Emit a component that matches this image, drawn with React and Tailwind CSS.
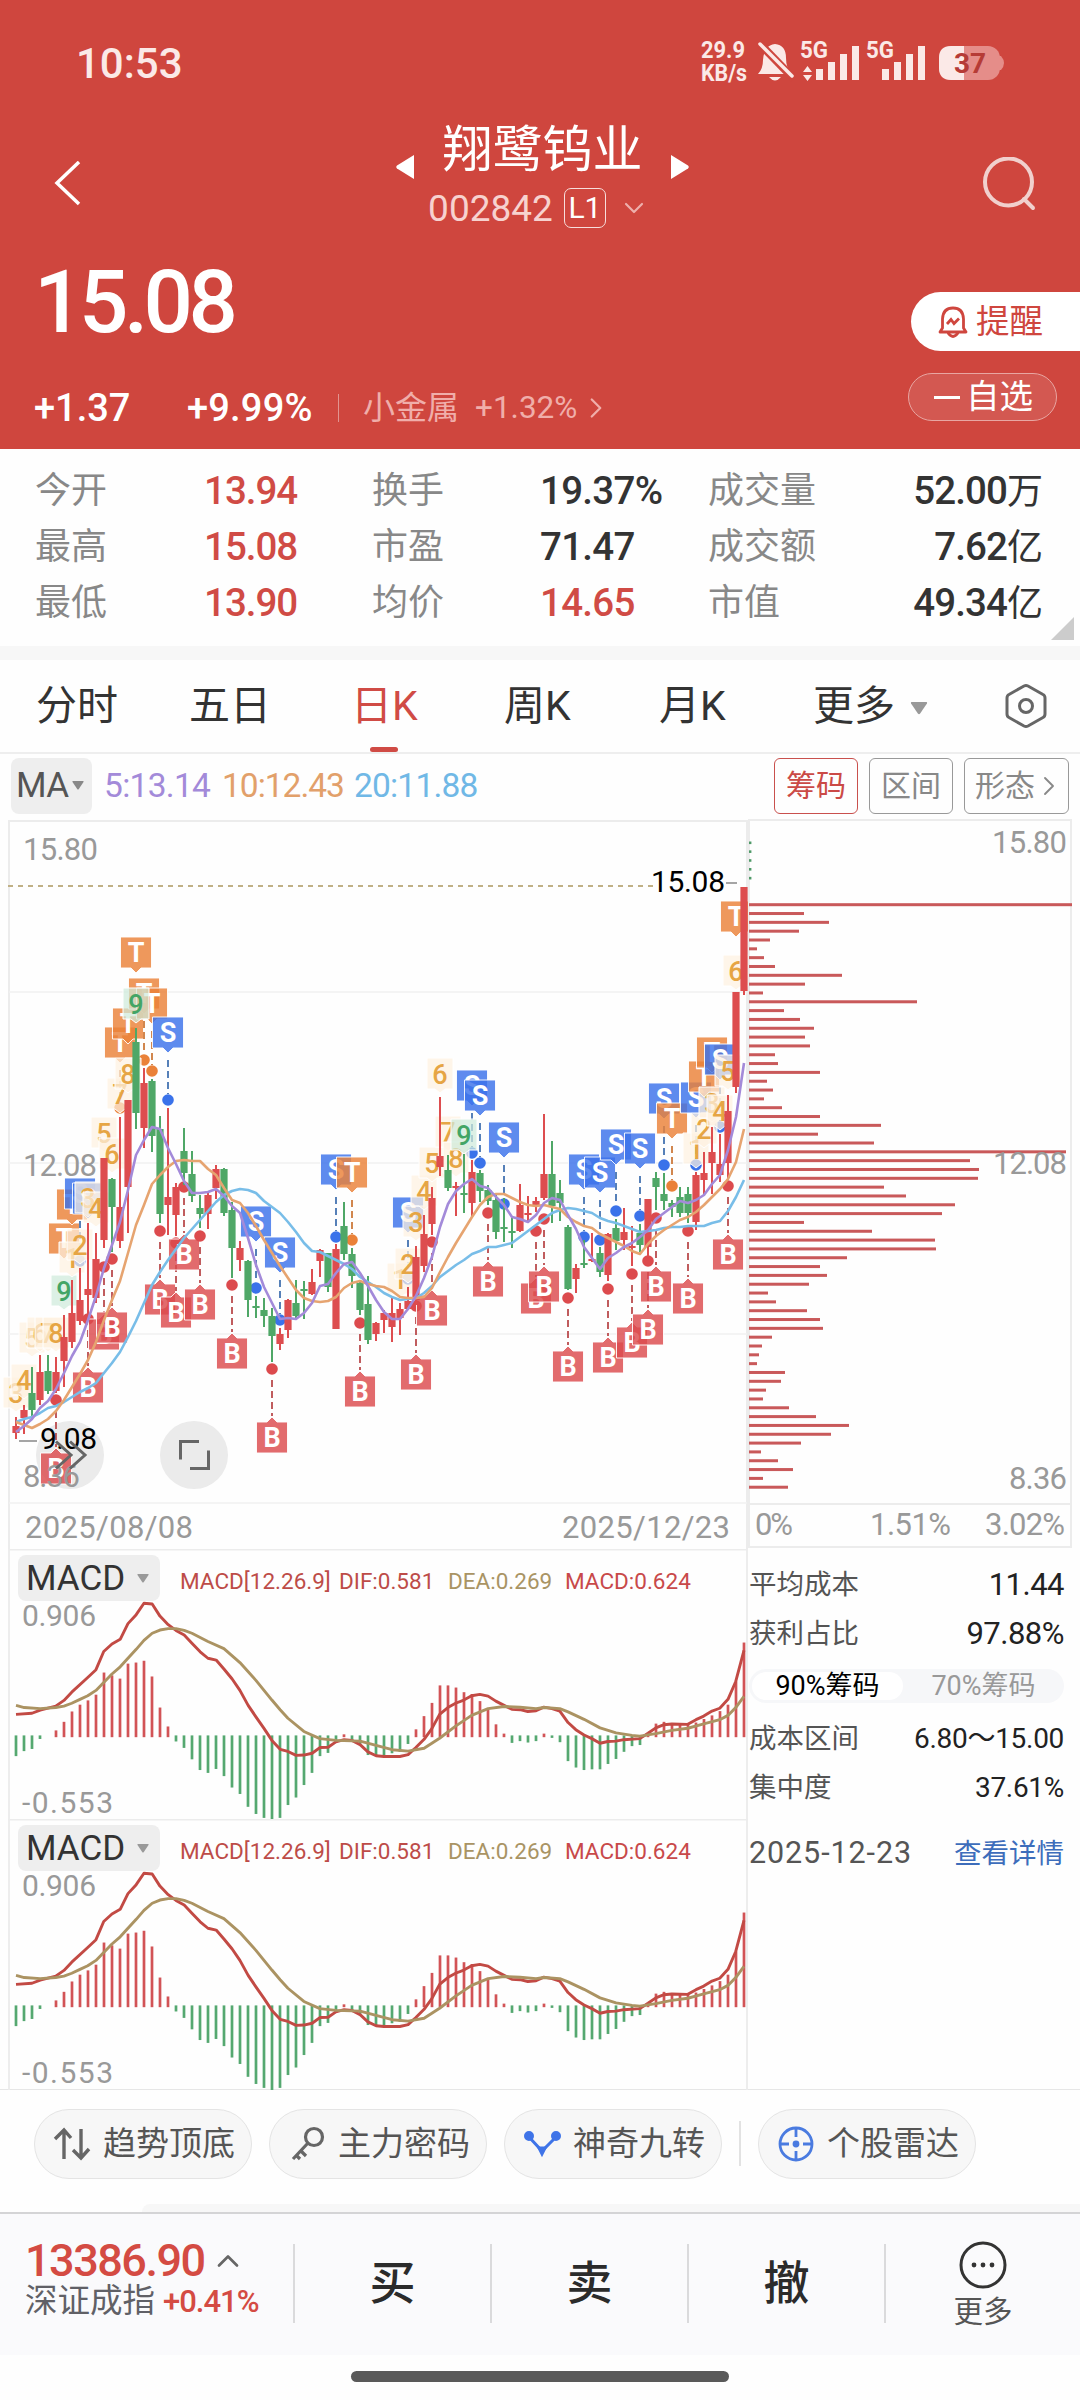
import { ChevronDown, ChevronRight, ChevronUp } from "lucide-react";

// [direction, high, bodyTop, bodyBottom, low]
const CANDLES = [
  ["r", 1417, 1426, 1433, 1439], ["r", 1405, 1410, 1418, 1434], ["g", 1367, 1393, 1410, 1416], ["r", 1355, 1372, 1400, 1405],
  ["g", 1355, 1371, 1391, 1394], ["r", 1357, 1372, 1391, 1393], ["r", 1315, 1337, 1361, 1387], ["r", 1280, 1313, 1342, 1348],
  ["r", 1268, 1300, 1321, 1325], ["r", 1223, 1289, 1295, 1320], ["r", 1233, 1259, 1298, 1303], ["r", 1158, 1158, 1240, 1248],
  ["g", 1178, 1179, 1207, 1252], ["r", 1117, 1207, 1241, 1248], ["r", 1100, 1100, 1187, 1233], ["g", 1028, 1042, 1113, 1129],
  ["r", 1068, 1083, 1128, 1148], ["g", 1079, 1081, 1136, 1152], ["g", 1116, 1129, 1214, 1223], ["r", 1108, 1197, 1205, 1235],
  ["r", 1183, 1187, 1215, 1236], ["g", 1128, 1151, 1173, 1185], ["g", 1151, 1174, 1196, 1202], ["g", 1195, 1208, 1214, 1228],
  ["r", 1192, 1195, 1214, 1229], ["r", 1165, 1169, 1188, 1199], ["g", 1168, 1169, 1213, 1216], ["g", 1202, 1210, 1248, 1278],
  ["r", 1241, 1248, 1260, 1271], ["g", 1260, 1261, 1300, 1317], ["g", 1296, 1306, 1308, 1318], ["g", 1298, 1310, 1316, 1327],
  ["g", 1308, 1316, 1336, 1362], ["r", 1328, 1334, 1344, 1350], ["r", 1299, 1300, 1330, 1338], ["g", 1280, 1303, 1316, 1319],
  ["g", 1281, 1289, 1291, 1319], ["r", 1269, 1282, 1294, 1295], ["r", 1249, 1250, 1261, 1277], ["g", 1253, 1253, 1287, 1292],
  ["r", 1244, 1249, 1329, 1329], ["g", 1202, 1226, 1254, 1260], ["g", 1248, 1254, 1276, 1288], ["g", 1282, 1283, 1310, 1315],
  ["g", 1276, 1304, 1340, 1344], ["r", 1322, 1323, 1334, 1341], ["r", 1310, 1313, 1320, 1333], ["r", 1298, 1313, 1327, 1342],
  ["r", 1303, 1309, 1318, 1335], ["r", 1287, 1301, 1309, 1309], ["r", 1246, 1257, 1300, 1305], ["r", 1215, 1234, 1266, 1272],
  ["r", 1187, 1198, 1224, 1235], ["r", 1097, 1156, 1167, 1176], ["g", 1155, 1170, 1188, 1191], ["r", 1182, 1186, 1188, 1216],
  ["g", 1154, 1193, 1195, 1213], ["r", 1160, 1172, 1203, 1217], ["g", 1170, 1173, 1191, 1202], ["g", 1185, 1190, 1201, 1205],
  ["g", 1193, 1200, 1232, 1239], ["g", 1198, 1227, 1229, 1242], ["g", 1217, 1231, 1233, 1248], ["r", 1184, 1205, 1231, 1232],
  ["r", 1196, 1213, 1215, 1223], ["r", 1197, 1201, 1205, 1212], ["r", 1114, 1174, 1198, 1200], ["g", 1141, 1174, 1206, 1223],
  ["g", 1180, 1193, 1203, 1221], ["g", 1225, 1227, 1289, 1290], ["r", 1264, 1268, 1279, 1293], ["g", 1240, 1263, 1265, 1268],
  ["r", 1233, 1259, 1261, 1262], ["g", 1247, 1253, 1272, 1277], ["r", 1233, 1234, 1275, 1281], ["g", 1219, 1228, 1241, 1250],
  ["r", 1208, 1232, 1240, 1250], ["r", 1226, 1246, 1248, 1266], ["g", 1224, 1233, 1245, 1252], ["r", 1199, 1199, 1247, 1257],
  ["g", 1172, 1178, 1187, 1210], ["g", 1173, 1194, 1201, 1210], ["g", 1200, 1203, 1207, 1217], ["g", 1187, 1197, 1213, 1217],
  ["g", 1187, 1194, 1213, 1223], ["r", 1172, 1175, 1222, 1230], ["r", 1152, 1173, 1180, 1196], ["r", 1127, 1152, 1163, 1194],
  ["r", 1134, 1164, 1175, 1182], ["r", 1095, 1111, 1163, 1180], ["r", 992, 992, 1087, 1093], ["r", 887, 887, 991, 995],
];

const MA5 = [
  1432, 1426, 1419, 1408, 1401, 1389, 1373, 1356, 1342, 1320, 1296, 1268, 1245, 1222, 1190, 1155, 1140, 1127, 1129, 1148,
  1164, 1181, 1193, 1193, 1192, 1189, 1196, 1206, 1213, 1238, 1265, 1287, 1303, 1319, 1318, 1319, 1313, 1303, 1286, 1284,
  1273, 1264, 1262, 1273, 1286, 1300, 1312, 1319, 1319, 1309, 1296, 1278, 1257, 1227, 1204, 1191, 1184, 1179, 1186, 1188,
  1197, 1205, 1217, 1219, 1222, 1215, 1203, 1198, 1200, 1215, 1229, 1247, 1258, 1269, 1258, 1253, 1247, 1243, 1237, 1230,
  1219, 1213, 1207, 1201, 1203, 1200, 1195, 1184, 1175, 1150, 1117, 1063,
];
const MA10 = [
  1422, 1425, 1428, 1424, 1419, 1411, 1400, 1387, 1374, 1360, 1342, 1320, 1300, 1281, 1253, 1225, 1205, 1184, 1175, 1167,
  1161, 1160, 1161, 1161, 1169, 1175, 1188, 1200, 1203, 1213, 1226, 1240, 1253, 1266, 1278, 1290, 1298, 1301, 1302, 1301,
  1297, 1288, 1283, 1281, 1284, 1286, 1287, 1291, 1297, 1298, 1298, 1297, 1288, 1272, 1257, 1243, 1230, 1217, 1205, 1197,
  1194, 1194, 1198, 1202, 1205, 1206, 1205, 1207, 1209, 1217, 1222, 1226, 1228, 1234, 1238, 1242, 1246, 1251, 1254, 1244,
  1236, 1230, 1225, 1220, 1217, 1212, 1205, 1197, 1189, 1179, 1162, 1129,
];
const MA20 = [
  1422, 1419, 1417, 1413, 1408, 1406, 1402, 1397, 1392, 1388, 1383, 1373, 1363, 1352, 1337, 1321, 1303, 1285, 1272, 1260,
  1249, 1238, 1229, 1220, 1211, 1202, 1195, 1191, 1189, 1190, 1193, 1201, 1207, 1213, 1222, 1232, 1243, 1251, 1252, 1256,
  1260, 1264, 1269, 1277, 1282, 1287, 1293, 1297, 1300, 1299, 1298, 1293, 1286, 1277, 1271, 1265, 1260, 1254, 1251, 1247,
  1247, 1245, 1243, 1237, 1231, 1225, 1219, 1213, 1210, 1208, 1209, 1211, 1213, 1218, 1221, 1223, 1226, 1229, 1232, 1231,
  1230, 1228, 1227, 1227, 1226, 1226, 1226, 1223, 1221, 1211, 1197, 1180,
];

// [kind, candle index, tag top, dot y (0 = no dot)]
const SIGNALS = [
  ["T", 6, 1223, 0], ["T", 7, 1189, 0], ["S", 8, 1178, 1261], ["S", 9, 1183, 0],
  ["T", 13, 1027, 1108], ["T", 14, 1008, 0], ["T", 15, 937, 0], ["T", 16, 978, 1060], ["T", 17, 988, 1071],
  ["S", 19, 1017, 1100], ["S", 30, 1206, 1288], ["S", 33, 1237, 1320], ["S", 40, 1154, 1237], ["T", 42, 1157, 1240],
  ["S", 49, 1197, 1279], ["S", 57, 1070, 1153], ["S", 58, 1080, 1163], ["S", 61, 1122, 1204],
  ["S", 71, 1154, 1237], ["S", 73, 1157, 1240], ["S", 75, 1129, 1211], ["S", 78, 1133, 1216],
  ["S", 81, 1083, 1165], ["T", 82, 1103, 1186], ["S", 85, 1082, 1165], ["T", 86, 1061, 0], ["T", 87, 1037, 0],
  ["S", 88, 1044, 1127], ["T", 90, 901, 0],
  ["B", 5, 1453, 1400], ["B", 9, 1372, 1319], ["B", 11, 1319, 1267], ["B", 12, 1312, 1259], ["B", 18, 1284, 1231],
  ["B", 20, 1297, 1243], ["B", 21, 1239, 1187], ["B", 23, 1289, 1236], ["B", 27, 1338, 1285], ["B", 32, 1422, 1369],
  ["B", 43, 1376, 1323], ["B", 50, 1359, 1306], ["B", 52, 1295, 1242], ["B", 59, 1266, 1213], ["B", 65, 1283, 1231],
  ["B", 66, 1271, 1219], ["B", 69, 1351, 1298], ["B", 74, 1342, 1289], ["B", 77, 1327, 1274], ["B", 79, 1314, 1261],
  ["B", 80, 1271, 1218], ["B", 84, 1283, 1231], ["B", 89, 1239, 1186],
];

// [digit, candle index, tag top]
const COUNTS = [
  [3, 0, 1377], [4, 1, 1364], [5, 2, 1322], [6, 3, 1317], [7, 4, 1317], [8, 5, 1317], [9, 6, 1275], [1, 7, 1242],
  [2, 8, 1229], [3, 9, 1182], [4, 10, 1192], [5, 11, 1117], [6, 12, 1138], [7, 13, 1078], [8, 14, 1058], [9, 15, 988],
  [1, 48, 1263], [2, 49, 1248], [3, 50, 1206], [4, 51, 1175], [5, 52, 1147], [6, 53, 1058], [7, 54, 1116], [8, 55, 1142],
  [9, 56, 1119], [1, 85, 1133], [2, 86, 1113], [3, 87, 1087], [4, 88, 1095], [5, 89, 1055], [6, 90, 955],
];

const CHIPS = [
  323, 55, 80, 50, 21, 8, 15, 26, 93, 56, 14, 168, 35, 51, 65, 56, 61, 26, 29, 71, 18, 24, 15, 33, 71, 132, 69, 125, 317,
  221, 230, 229, 135, 157, 206, 193, 55, 123, 186, 187, 98, 71, 78, 60, 19, 27, 58, 71, 74, 23, 13, 10, 8, 36, 32, 17, 14,
  40, 67, 100, 82, 52, 12, 29, 44, 14, 39,
];

// histogram tips, same vertical unit as the DIF / DEA points
const HIST = [
  604, 590, 584, 556, 548, 532, 508, 479, 460, 448, 432, 370, 378, 387, 345, 342, 337, 381, 468, 521, 563, 581, 613, 643,
  651, 640, 660, 692, 710, 746, 766, 777, 783, 777, 741, 720, 685, 651, 604, 595, 567, 543, 558, 570, 601, 604, 604, 596,
  592, 570, 529, 492, 455, 406, 406, 412, 425, 430, 450, 472, 515, 541, 567, 562, 566, 562, 541, 553, 565, 618, 636, 643,
  641, 641, 626, 612, 592, 576, 573, 543, 513, 508, 512, 515, 515, 510, 500, 490, 478, 460, 395, 286,
];
const DIF = [
  [33, 487], [66, 484], [83, 475], [115, 464], [132, 448], [148, 425], [181, 384], [198, 362], [214, 311], [231, 290],
  [248, 277], [264, 233], [281, 208], [297, 176], [314, 178], [330, 212], [347, 236], [363, 252], [380, 265], [396, 288],
  [413, 312], [429, 330], [446, 335], [462, 360], [479, 388], [495, 420], [512, 462], [528, 494], [545, 527], [561, 560],
  [578, 585], [594, 591], [611, 602], [627, 601], [644, 596], [660, 580], [677, 579], [693, 564], [710, 558], [726, 560],
  [743, 572], [759, 592], [776, 603], [792, 605], [825, 605], [842, 600], [858, 580], [875, 557], [891, 527], [907, 487],
  [924, 468], [940, 456], [957, 447], [973, 435], [990, 431], [1007, 436], [1023, 450], [1040, 462], [1056, 473],
  [1073, 474], [1089, 479], [1106, 477], [1122, 467], [1139, 471], [1155, 478], [1172, 510], [1188, 530], [1205, 545],
  [1221, 555], [1238, 568], [1254, 563], [1271, 562], [1287, 558], [1320, 555], [1337, 540], [1353, 525], [1370, 516],
  [1386, 514], [1419, 515], [1436, 502], [1452, 492], [1469, 478], [1485, 470], [1502, 445], [1518, 395], [1535, 308],
];
const DEA = [
  [33, 462], [50, 468], [83, 471], [115, 468], [132, 464], [148, 456], [165, 445], [181, 435], [198, 420], [214, 398],
  [231, 374], [248, 354], [264, 330], [281, 305], [297, 280], [314, 260], [330, 251], [347, 247], [363, 247], [380, 252],
  [396, 260], [429, 283], [462, 303], [495, 342], [528, 392], [561, 447], [578, 474], [594, 498], [627, 535], [660, 555],
  [693, 560], [743, 562], [776, 574], [809, 586], [842, 590], [875, 582], [907, 554], [940, 520], [973, 490], [1007, 471],
  [1040, 465], [1073, 467], [1106, 471], [1122, 468], [1155, 471], [1172, 480], [1205, 501], [1238, 525], [1271, 539],
  [1304, 546], [1320, 548], [1353, 541], [1386, 532], [1419, 526], [1452, 514], [1485, 502], [1502, 490], [1518, 468],
  [1535, 437],
];

const COLORS = { r: "#dd4d4f", g: "#4fa767" };
const DOTS = { S: "#3a72ea", T: "#ea8138", B: "#dc4a4d" };
const STEMS = { S: "#5680b8", T: "#d1864e", B: "#c05c5e" };

const cx = (i) => 16 + i * 8;
const line = (values) => values.map((y, i) => `${cx(i)},${y}`).join(" ");
const macdY = (v) => v / 2.8 - 8.6;
const macdLine = (pts) => pts.map(([x, y]) => `${x / 2.0632},${macdY(y)}`).join(" ");

function Signal({ kind, i, top, dot }) {
  const x = cx(i);
  const up = kind === "B";
  const shape = up
    ? `M${x - 15.5} ${top} H${x - 5} L${x} ${top - 5} L${x + 5} ${top} H${x + 15.5} V${top + 31} H${x - 15.5} Z`
    : `M${x - 15.5} ${top} H${x + 15.5} V${top + 31} H${x + 5} L${x} ${top + 36} L${x - 5} ${top + 31} H${x - 15.5} Z`;
  return (
    <g>
      {dot > 0 && (
        <>
          <line
            x1={x}
            x2={x}
            y1={up ? dot + 11 : top + 43}
            y2={up ? top - 6 : dot - 6}
            stroke={STEMS[kind]}
            strokeWidth="2"
            strokeDasharray="7 4"
          />
          <circle cx={x} cy={dot} r="5.8" fill={DOTS[kind]} />
        </>
      )}
      <path d={shape} fill={DOTS[kind]} fillOpacity="0.82" stroke="#fff" strokeOpacity="0.9" strokeWidth="1" />
      <text x={x} y={top + 25} textAnchor="middle" fontSize="27" fontWeight="700" fill="#fff">
        {kind}
      </text>
    </g>
  );
}

function Count({ n, i, top }) {
  const x = cx(i);
  const green = n === 9;
  return (
    <g>
      <path
        d={`M${x - 13} ${top} H${x + 13} V${top + 31} H${x + 5} L${x} ${top + 35} L${x - 5} ${top + 31} H${x - 13} Z`}
        fill={green ? "#cfeadb" : "#fdf1e0"}
        fillOpacity="0.72"
        stroke="#fff"
        strokeWidth="1"
      />
      <text x={x} y={top + 26} textAnchor="middle" fontSize="27" fontWeight="500" fill={green ? "#43a565" : "#e6a544"}>
        {n}
      </text>
    </g>
  );
}

function KLineChart() {
  return (
    <svg width="748" height="730" viewBox="0 819 748 730" className="block">
      <g stroke="#ececec" strokeWidth="2" fill="none">
        <path d="M9 1549 V821 H747 V1549" />
        <path d="M9 992 H747 M9 1163 H747 M9 1334 H747 M9 1503 H747" strokeWidth="1.5" stroke="#f1f1f1" />
      </g>
      <line x1="8" x2="654" y1="886" y2="886" stroke="#c0b085" strokeWidth="2" strokeDasharray="5 5" />
      <g fill="#999" fontSize="31">
        <text x="23" y="860" textLength="75">15.80</text>
        <text x="23" y="1176" textLength="74">12.08</text>
        <text x="25" y="1538" textLength="168">2025/08/08</text>
        <text x="562" y="1538" textLength="168">2025/12/23</text>
      </g>
      <g fill="#d8d8d8" fillOpacity="0.5">
        <circle cx="70" cy="1455" r="34" />
        <circle cx="194" cy="1455" r="34" />
      </g>
      {SIGNALS.map(([kind, i, top, dot]) => (
        <Signal key={kind + i} kind={kind} i={i} top={top} dot={dot} />
      ))}
      {COUNTS.map(([n, i, top]) => (
        <Count key={i} n={n} i={i} top={top} />
      ))}
      {CANDLES.map(([c, high, top, bottom, low], i) => (
        <g key={i} fill={COLORS[c]}>
          <rect x={cx(i) - 1} y={high} width="2" height={low - high} />
          <rect x={cx(i) - 3.6} y={top} width="7.2" height={bottom - top} />
        </g>
      ))}
      <g fill="none" strokeWidth="2.6" strokeLinejoin="round">
        <polyline points={line(MA20)} stroke="#78bde8" />
        <polyline points={line(MA10)} stroke="#e6a470" />
        <polyline points={line(MA5)} stroke="#a38ad9" />
      </g>
      <text x="651" y="892" fontSize="30" fill="#000" textLength="74">15.08</text>
      <path d="M726 883 H737 M19 1441 H37" stroke="#888" strokeWidth="1.6" />
      <text x="40" y="1449" fontSize="30" fill="#000" textLength="57">9.08</text>
      <text x="23" y="1487" fontSize="31" fill="#999" textLength="57">8.36</text>
      <g fill="none" stroke="#666" strokeWidth="3">
        <path d="M56 1441.500 L71 1455 L56 1468.500 M70 1441.500 L85 1455 L70 1468.500" />
        <path d="M180.500 1459.500 V1441.500 H199 M208.500 1450.500 V1468.500 H190" />
      </g>
    </svg>
  );
}

function ChipChart() {
  return (
    <svg width="332" height="730" viewBox="748 819 332 730" className="block">
      <path d="M749 1547 V820 H1071 V1547 Z M749 1504 H1071" fill="none" stroke="#ececec" strokeWidth="2" />
      {[0, 1, 2, 3, 4].map((i) => (
        <rect key={i} x="749" y={841.5 + i * 8.84} width="2.4" height="2.6" fill="#4f9a68" />
      ))}
      {CHIPS.map((w, i) => (
        <rect key={i} x="749" y={903.2 + i * 8.826} width={w} height="3" fill="#c9595a" />
      ))}
      <g fill="#999" fontSize="31" textAnchor="end">
        <text x="1067" y="853" textLength="75">15.80</text>
        <text x="1067" y="1174" textLength="74">12.08</text>
        <text x="1067" y="1488.500" textLength="58">8.36</text>
        <text x="793" y="1535" textLength="38">0%</text>
        <text x="951" y="1535" textLength="81">1.51%</text>
        <text x="1065" y="1535" textLength="80">3.02%</text>
      </g>
    </svg>
  );
}

function Caret({ className }) {
  return (
    <svg viewBox="0 0 12 9" className={className} fill="currentColor">
      <path d="M1 0 H11 Q12 0 11.500 1 L6.800 8 Q6 9 5.200 8 L.5 1 Q0 0 1 0 Z" />
    </svg>
  );
}

function MacdPanel() {
  return (
    <div className="relative h-[270px] w-[748px]">
      <svg width="748" height="271" className="absolute left-0 top-0">
        <path d="M9 0 V271 M747 0 V271 M9 0.500 H747" stroke="#ececec" strokeWidth="1.800" />
        {HIST.map((v, i) =>
          v === 548 ? null : (
            <line
              key={i}
              x1={cx(i)}
              x2={cx(i)}
              y1={macdY(v < 548 ? 551 : 546)}
              y2={macdY(v)}
              stroke={v < 548 ? "#d25356" : "#55a870"}
              strokeWidth="2.700"
            />
          )
        )}
        <g fill="none" strokeWidth="2.900" strokeLinejoin="round">
          <polyline points={macdLine(DIF)} stroke="#c24a44" />
          <polyline points={macdLine(DEA)} stroke="#ab9362" />
        </g>
        <g fill="#999" fontSize="30">
          <text x="22" y="77" textLength="74">0.906</text>
          <text x="22" y="264" textLength="91">-0.553</text>
        </g>
      </svg>
      <div className="relative flex items-center pl-[18px] pt-[6px] text-[22.5px] leading-none">
        <div className="flex h-[46px] w-[142px] items-center rounded-lg bg-[#eeeeee] pl-2 text-[35px] text-[#333]">
          MACD
          <Caret className="ml-[12px] h-[9px] w-3 text-[#999]" />
        </div>
        <span className="ml-5 w-[159px] whitespace-nowrap pt-[6px] text-[#bd4c48]">MACD[12.26.9]</span>
        <span className="w-[109px] pt-[6px] text-[#bd4c48]">DIF:0.581</span>
        <span className="w-[117px] pt-[6px] text-[#a99464]">DEA:0.269</span>
        <span className="pt-[6px] text-[#c8494a]">MACD:0.624</span>
      </div>
    </div>
  );
}

function StatusIcons() {
  return (
    <svg width="310" height="50" viewBox="698 38 310 50" fill="#fbe9e7">
      <g fontWeight="700" fontSize="23">
        <text x="701" y="58" textLength="44" lengthAdjust="spacingAndGlyphs">29.9</text>
        <text x="701" y="81" textLength="46" lengthAdjust="spacingAndGlyphs">KB/s</text>
        <text x="800" y="57.500" textLength="28" lengthAdjust="spacingAndGlyphs">5G</text>
        <text x="866" y="57.500" textLength="28" lengthAdjust="spacingAndGlyphs">5G</text>
      </g>
      <path d="M758 74 Q763 69 763 60 Q764 45 775 44 Q786 45 786 58 Q786 69 792 74 Z M769 77 H781 Q775 84 769 77 Z" />
      <path d="M759 43 L794 79" stroke="#cf463e" strokeWidth="8" />
      <path d="M760 44 L792 76" stroke="#fbe9e7" strokeWidth="3.500" strokeLinecap="round" />
      <path d="M803 72 L807.500 66 L812 72 Z M803 75 L807.500 81 L812 75 Z" />
      <path
        d="M819.500 80 V69 M831.500 80 V62 M843.500 80 V54 M855.500 80 V46 M885.500 80 V69 M897.500 80 V62 M909.500 80 V54 M921.500 80 V46"
        stroke="#fbe9e7"
        strokeWidth="7"
      />
      <rect x="939" y="46" width="61" height="34" rx="12" fill="#e58d89" />
      <path d="M999 56 H1001 Q1007 63 1001 70 H999 Z" fill="#e58d89" />
      <path d="M951 46 H964 V80 H951 Q939 80 939 68 V58 Q939 46 951 46 Z" />
      <text x="954" y="73" fontSize="28" fontWeight="700" fill="#b63b36" textLength="32">37</text>
    </svg>
  );
}

const STATS = [
  ["今开", "13.94", "换手", "19.37%", false, "成交量", "52.00万"],
  ["最高", "15.08", "市盈", "71.47", false, "成交额", "7.62亿"],
  ["最低", "13.90", "均价", "14.65", true, "市值", "49.34亿"],
];

function Header() {
  return (
    <header className="h-[449px] bg-[#cf463e] text-white">
      <div className="flex h-[126px] items-center justify-between pl-[76px] pr-[72px]">
        <span className="pt-[2px] text-[42px] font-medium leading-none text-[#fbe9e7]">10:53</span>
        <StatusIcons />
      </div>

      <div className="flex h-[116px] items-center justify-between pl-[54px] pr-[44px]">
        <svg width="54" height="46" viewBox="0 0 54 46" fill="none" stroke="currentColor" strokeWidth="3.500">
          <path d="M25 1 L3 22 L25 43" />
        </svg>
        <div className="flex flex-col items-center">
          <div className="flex h-12 items-center pr-[6px] text-[50px] leading-none">
            <svg width="18" height="24" viewBox="0 0 18 24" className="mr-[29px] mt-[34px]" fill="currentColor">
              <path d="M18 0 V24 L1 13.500 Q-.5 12 1 10.500 Z" />
            </svg>
            翔鹭钨业
            <svg width="18" height="24" viewBox="0 0 18 24" className="ml-[28px] mt-[34px]" fill="currentColor">
              <path d="M0 0 V24 L17 13.500 Q18.500 12 17 10.500 Z" />
            </svg>
          </div>
          <div className="flex h-[68px] items-center pr-[12px] text-[37px] leading-none text-[#f7d2cf]">
            002842
            <span className="ml-[11px] flex h-10 w-[42px] items-center justify-center rounded-[7px] border-[1.5px] border-[#f7dedc] text-[30px] text-white">
              L1
            </span>
            <ChevronDown className="ml-[12px] h-8 w-8 text-[#eeb0ac]" strokeWidth={1.6} />
          </div>
        </div>
        <svg width="54" height="54" viewBox="0 0 54 54" fill="none" stroke="#f1d0cd" strokeWidth="4">
          <circle cx="26.500" cy="25" r="23.500" />
          <path d="M42 42 L51 51" strokeLinecap="round" />
        </svg>
      </div>

      <div className="flex justify-between">
        <div className="pl-[34px]">
          <div className="flex h-[118px] items-center text-[87px] font-medium leading-none tracking-[-4.500px]">
            <span className="pt-[3px]">15.08</span>
          </div>
          <div className="flex h-[89px] items-center pt-[6px] text-[38px] font-medium leading-none">
            <span className="w-[153px]">+1.37</span>
            <span className="w-[151px] tracking-[0.2px]">+9.99%</span>
            <span className="h-7 w-px bg-[#e29490]" />
            <span className="ml-6 text-[32px] font-normal text-[#f0aeaa]">小金属</span>
            <span className="ml-[16px] text-[31.500px] font-normal text-[#f0aeaa]">+1.32%</span>
            <ChevronRight className="ml-[2px] h-[34px] w-[34px] text-[#f0aeaa]" strokeWidth={1.6} />
          </div>
        </div>
        <div className="flex flex-col items-end pt-[50px]">
          <div className="flex h-[59px] w-[169px] items-center rounded-l-full bg-white pl-[27px] text-[33.500px] leading-none text-[#cf463e]">
            <svg width="30" height="32" viewBox="0 0 30 32" fill="none" stroke="currentColor" strokeWidth="2.800" className="mr-[8px]">
              <path d="M2 26 H28 L25.500 22 V13 Q25 2 15 2 Q5 2 4.500 13 V22 Z M10 27 Q15 34 20 27" strokeLinejoin="round" />
              <path d="M9 18 L13 13.500 L16 17.500 L21 12.500" />
            </svg>
            提醒
          </div>
          <div className="mr-[23px] mt-[22px] flex h-[48px] w-[149px] items-center rounded-full border-[1.5px] border-[#e8a6a2] bg-[#d35851] pl-[25px] text-[33.500px] leading-none">
            <span className="mr-[6px] h-[3px] w-[26px] bg-white" />
            自选
          </div>
        </div>
      </div>
    </header>
  );
}

function Stats() {
  return (
    <section className="relative h-[197px] pt-[14px]">
      {STATS.map(([a, av, b, bv, red, c, cv]) => (
        <div
          key={a}
          className="grid h-14 grid-cols-[169px_168px_168px_168px_120px_1fr] items-center pl-[35px] pr-[37px] text-[36px] leading-none text-[#888]"
        >
          <span>{a}</span>
          <span className="text-[38.500px] font-medium tracking-[-1px] text-[#d04b45]">{av}</span>
          <span>{b}</span>
          <span
            className={
              red
                ? "text-[38.500px] font-medium tracking-[-0.700px] text-[#d04b45]"
                : "text-[38.500px] font-medium tracking-[-0.700px] text-[#333]"
            }
          >
            {bv}
          </span>
          <span>{c}</span>
          <span className="whitespace-nowrap text-right text-[38.500px] font-medium tracking-[-0.900px] text-[#333]">
            {cv.slice(0, -1)}
            <span className="text-[36px] font-normal tracking-normal">{cv.slice(-1)}</span>
          </span>
        </div>
      ))}
      <svg width="23" height="23" className="absolute bottom-[6px] right-[6px]" fill="#ccc">
        <path d="M23 0 V23 H0 Z" />
      </svg>
    </section>
  );
}

function Tabs() {
  return (
    <nav className="flex h-[94px] border-b-2 border-[#eeeeee] pl-[36px] pr-8 text-[41px] leading-none text-[#333]">
      <span className="flex w-[153px] items-center">分时</span>
      <span className="flex w-[162px] items-center">五日</span>
      <span className="relative flex w-[153px] items-center text-[#d04b45]">
        日K
        <span className="absolute bottom-0 left-[19px] h-[5px] w-7 rounded-full bg-[#d04b45]" />
      </span>
      <span className="flex w-[155px] items-center">周K</span>
      <span className="flex w-[154px] items-center">月K</span>
      <span className="flex items-center">
        更多
        <Caret className="ml-[14px] mt-1 h-[13px] w-5 text-[#999]" />
      </span>
      <svg width="44" height="46" viewBox="0 0 44 46" fill="none" stroke="#666" strokeWidth="3" className="ml-auto mt-[23px]">
        <path d="M20 3 Q22 2 24 3 L39 11.500 Q41 12.500 41 15 V31 Q41 33.500 39 34.500 L24 43 Q22 44 20 43 L5 34.500 Q3 33.500 3 31 V15 Q3 12.500 5 11.500 Z" />
        <circle cx="22" cy="23" r="6.500" />
      </svg>
    </nav>
  );
}

function MaRow() {
  return (
    <div className="flex h-[65px] items-center pb-[2px] pl-[11px] pr-[11px] text-[33.500px] leading-none">
      <div className="flex h-14 w-[81px] items-center rounded-lg bg-[#eeeeee] pl-[5px] text-[35px] tracking-[-0.500px] text-[#555]">
        MA
        <Caret className="ml-[3px] h-[9px] w-3 text-[#888]" />
      </div>
      <span className="ml-[12px] w-[118px] tracking-[-0.700px] text-[#a38ad9]">5:13.14</span>
      <span className="w-[132px] tracking-[-1px] text-[#e2a06a]">10:12.43</span>
      <span className="tracking-[-0.800px] text-[#70b8e6]">20:11.88</span>
      <div className="ml-auto flex gap-[11px] text-[30px] text-[#888]">
        <span className="flex h-14 w-[84px] items-center justify-center rounded-md border-[1.5px] border-[#c9504d] text-[#cb4a46]">筹码</span>
        <span className="flex h-14 w-[84px] items-center justify-center rounded-md border-[1.5px] border-[#999]">区间</span>
        <span className="flex h-14 w-[105px] items-center rounded-md border-[1.5px] border-[#999] pl-[10px]">
          形态
          <ChevronRight className="-ml-[2px] h-8 w-8 shrink-0" strokeWidth={1.4} />
        </span>
      </div>
    </div>
  );
}

function InfoRow({ label, value, small }) {
  return (
    <div className="flex h-[49px] items-center justify-between">
      <span className="text-[27.500px] text-[#555]">{label}</span>
      <span
        className={
          small ? "text-[28px] tracking-[-0.300px] text-[#222]" : "text-[31px] tracking-[-0.500px] text-[#222]"
        }
      >
        {value}
      </span>
    </div>
  );
}

function ChipInfo() {
  return (
    <div className="h-[540px] w-[316px] pl-px pt-[11px] leading-none">
      <InfoRow label="平均成本" value="11.44" />
      <InfoRow label="获利占比" value="97.88%" />
      <div className="mt-[11px] flex h-[34px] items-center rounded-full bg-[#f6f7f9] pl-[3px] text-[27px]">
        <span className="flex h-7 w-[151px] items-center justify-center rounded-full bg-white text-black">90%筹码</span>
        <span className="flex-1 text-center text-[#999]">70%筹码</span>
      </div>
      <div className="mt-[11px]">
        <InfoRow label="成本区间" value="6.80～15.00" small />
        <InfoRow label="集中度" value="37.61%" small />
      </div>
      <div className="mt-[26px] flex items-center justify-between">
        <span className="text-[30.500px] tracking-[0.900px] text-[#555]">2025-12-23</span>
        <span className="text-[27.500px] text-[#3d6dbb]">查看详情</span>
      </div>
    </div>
  );
}

function Tools() {
  const chip =
    "flex h-[70px] w-[218px] items-center rounded-full border-[1.5px] border-[#e4e4e4] bg-[#f7f7f7] pl-[18px]";
  return (
    <div className="flex h-[114px] items-center gap-[17px] pb-[7px] pl-[34px] text-[33px] leading-none text-[#555]">
      <div className={chip}>
        <svg width="38" height="36" viewBox="0 0 38 36" fill="none" stroke="#666" strokeWidth="3.400" className="mr-[12px] shrink-0">
          <path d="M11 33 V4 M2 13 L11 4 L18 12 M28 3 V32 M36 23 L28 32 L20 24" />
        </svg>
        趋势顶底
      </div>
      <div className={chip}>
        <svg width="38" height="36" viewBox="0 0 38 36" fill="none" stroke="#666" strokeWidth="3.200" className="mr-[12px] shrink-0">
          <circle cx="26" cy="11" r="8.500" />
          <path d="M20 17 L5 33 M13 25 L18 30 M8 29 L12 33" />
        </svg>
        主力密码
      </div>
      <div className={chip}>
        <svg width="38" height="36" viewBox="0 0 38 36" fill="#3f74e8" stroke="#3f74e8" strokeWidth="3" className="mr-[12px] shrink-0">
          <path d="M6 11 L19 25 L33 11" fill="none" />
          <circle cx="6" cy="10" r="3.500" />
          <circle cx="33" cy="10" r="3.500" />
          <path d="M16 22 H22 L19 28 Z" />
        </svg>
        神奇九转
      </div>
      <div className="flex items-center gap-[17px]">
        <span className="h-[45px] w-[2px] bg-[#e2e2e2]" />
        <div className={chip}>
          <svg width="38" height="36" viewBox="0 0 38 36" fill="none" stroke="#4a7be0" strokeWidth="2.800" className="mr-[12px] shrink-0">
            <circle cx="19" cy="18" r="16" />
            <path d="M19 2 V11 M19 25 V34 M3 18 H12 M26 18 H35" />
            <circle cx="19" cy="18" r="2" fill="#4a7be0" />
          </svg>
          个股雷达
        </div>
      </div>
    </div>
  );
}

function BottomBar() {
  return (
    <footer className="flex h-[143px] border-t-2 border-[#d4d4d6] bg-[#fafafc] leading-none">
      <div className="w-[293px] pl-[25px] pt-[24px]">
        <div className="flex items-center text-[45px] font-medium tracking-[-1.500px] text-[#d44b43]">
          13386.90
          <ChevronUp className="ml-[5px] h-9 w-9 text-[#666]" strokeWidth={1.8} />
        </div>
        <div className="mt-[2px] flex items-center whitespace-nowrap text-[32.500px] text-[#606066]">
          深证成指
          <span className="ml-[8px] text-[31px] font-medium tracking-[-1px] text-[#d44b43]">+0.41%</span>
        </div>
      </div>
      {["买", "卖", "撤"].map((t) => (
        <div key={t} className="flex w-[197px] items-center">
          <span className="mt-[-2px] h-[79px] w-[2px] bg-[#dadadc]" />
          <span className="flex-1 pb-[4px] text-center text-[46px] font-medium text-[#2b2b2b]">{t}</span>
        </div>
      ))}
      <div className="flex flex-1 items-center">
        <span className="mt-[-2px] h-[79px] w-[2px] bg-[#dadadc]" />
        <div className="flex flex-1 flex-col items-center text-[29.500px] text-[#555]">
          <svg width="48" height="48" viewBox="0 0 48 48" className="mb-[9px]" fill="#333">
            <circle cx="24" cy="24" r="22" fill="none" stroke="#333" strokeWidth="3" />
            <circle cx="15" cy="24" r="2.400" />
            <circle cx="24" cy="24" r="2.400" />
            <circle cx="33" cy="24" r="2.400" />
          </svg>
          更多
        </div>
      </div>
    </footer>
  );
}

export default function App() {
  return (
    <div className="h-[2400px] w-[1080px] overflow-hidden bg-[#fefefe] font-['Roboto','Noto_Sans_CJK_SC',sans-serif]">
      <Header />
      <Stats />
      <div className="h-[14px] bg-[#f7f7f7]" />
      <Tabs />
      <MaRow />
      <main className="flex border-b border-[#e6e6e6]">
        <div>
          <KLineChart />
          <MacdPanel />
          <MacdPanel />
        </div>
        <div>
          <ChipChart />
          <ChipInfo />
        </div>
      </main>
      <Tools />
      <div className="flex h-[8px] justify-end">
        <span className="w-[938px] rounded-tl-lg bg-[#f7f7f7]" />
      </div>
      <BottomBar />
      <div className="flex justify-center pt-4">
        <span className="h-[11px] w-[378px] rounded-full bg-[#595959]" />
      </div>
    </div>
  );
}
